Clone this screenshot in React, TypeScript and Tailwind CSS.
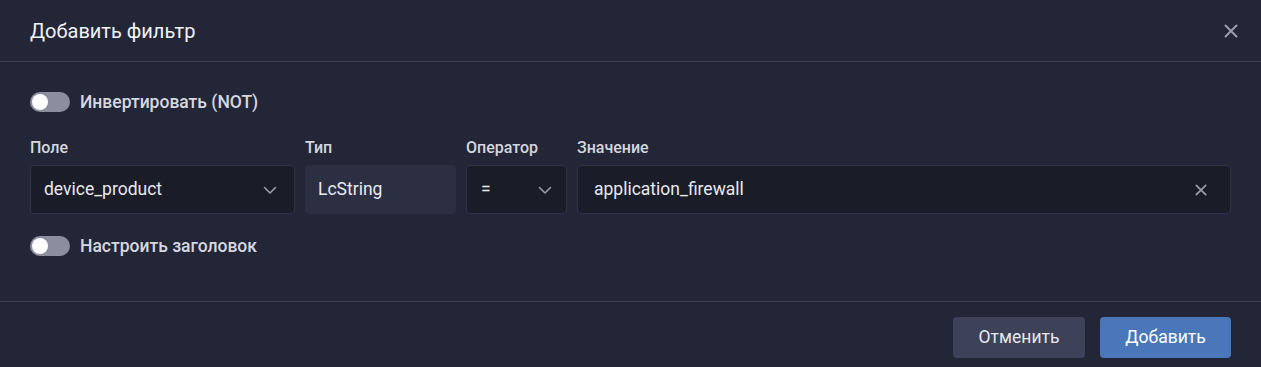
import React from "react";

function Toggle() {
  return (
    <div className="relative h-[20px] w-[40px] shrink-0 rounded-full bg-[#8b8e9f]">
      <div className="absolute left-[2px] top-[2px] h-[16px] w-[16px] rounded-full bg-white" />
    </div>
  );
}

function Chevron() {
  return (
    <svg width="14" height="14" viewBox="0 0 14 14" fill="none">
      <path d="M1.5 4.5 L7 10 L12.5 4.5" stroke="#9a9cab" strokeWidth="1.6" strokeLinecap="round" strokeLinejoin="round" />
    </svg>
  );
}

function XIcon({ size = 14, color = "#9a9cab" }: { size?: number; color?: string }) {
  return (
    <svg width={size} height={size} viewBox="0 0 14 14" fill="none">
      <path d="M1.5 1.5 L12.5 12.5 M12.5 1.5 L1.5 12.5" stroke={color} strokeWidth="2" strokeLinecap="round" />
    </svg>
  );
}

export default function App() {
  return (
    <div
      className="h-[367px] w-[1261px] overflow-hidden bg-[#232637] text-[#e8e9ef]"
      style={{ fontFamily: "Roboto, 'Noto Sans', sans-serif" }}
    >
      <div className="flex h-[62px] items-center justify-between border-b border-[#3a3d53] pl-[30px] pr-[23px]">
        <div className="text-[20px] leading-[28px] text-[#f1f2f6]">Добавить фильтр</div>
        <XIcon size={14} color="#9b9dad" />
      </div>

      <div className="px-[30px] pt-[28px]">
        <div className="flex h-[24px] items-center gap-[10px]">
          <Toggle />
          <span className="text-[17.5px] font-medium leading-[24px] text-[#d6d8e0]">Инвертировать (NOT)</span>
        </div>

        <div className="mt-[24px] flex gap-[10px]">
          <div className="flex w-[265px] flex-col">
            <div className="mb-[7px] h-[20px] text-[16px] font-medium leading-[20px] text-[#d4d6de]">Поле</div>
            <div className="flex h-[49px] items-center justify-between rounded-[4px] border border-[#30334a] bg-[#1a1c28] pl-[13px] pr-[17px]">
              <span className="text-[17.5px] text-[#e8e9ef]">device_product</span>
              <Chevron />
            </div>
          </div>
          <div className="flex w-[151px] flex-col">
            <div className="mb-[7px] h-[20px] text-[16px] font-medium leading-[20px] text-[#d4d6de]">Тип</div>
            <div className="flex h-[49px] items-center rounded-[4px] bg-[#2c2f42] pl-[13px]">
              <span className="text-[17.5px] text-[#e8e9ef]">LcString</span>
            </div>
          </div>
          <div className="flex w-[101px] flex-col">
            <div className="mb-[7px] h-[20px] text-[16px] font-medium leading-[20px] text-[#d4d6de]">Оператор</div>
            <div className="flex h-[49px] items-center justify-between rounded-[4px] border border-[#30334a] bg-[#1a1c28] pl-[14px] pr-[14px]">
              <span className="text-[17.5px] text-[#e8e9ef]">=</span>
              <Chevron />
            </div>
          </div>
          <div className="flex flex-1 flex-col">
            <div className="mb-[7px] h-[20px] text-[16px] font-medium leading-[20px] text-[#d4d6de]">Значение</div>
            <div className="flex h-[49px] items-center justify-between rounded-[4px] border border-[#30334a] bg-[#1a1c28] pl-[16px] pr-[23px]">
              <span className="text-[17.5px] text-[#e8e9ef]">application_firewall</span>
              <XIcon size={12} color="#9b9dad" />
            </div>
          </div>
        </div>

        <div className="mt-[20px] flex h-[24px] items-center gap-[10px]">
          <Toggle />
          <span className="text-[17.5px] font-medium leading-[24px] text-[#d6d8e0]">Настроить заголовок</span>
        </div>
      </div>

      <div className="mt-[43px] flex justify-end gap-[15px] border-t border-[#3a3d53] pr-[30px] pt-[15px]">
        <button className="h-[41px] w-[132px] rounded-[4px] bg-[#3e4259] text-[17.5px] text-[#e6e8f0]">Отменить</button>
        <button className="h-[41px] w-[131px] rounded-[4px] bg-[#4a77b9] text-[17.5px] text-white">Добавить</button>
      </div>
    </div>
  );
}
